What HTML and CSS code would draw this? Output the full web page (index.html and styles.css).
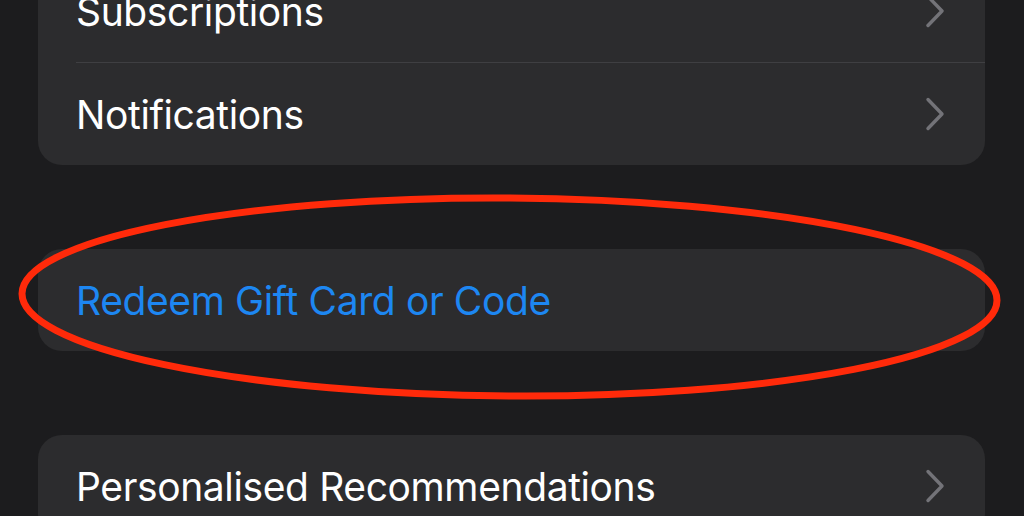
FILE: index.html
```html
<!DOCTYPE html>
<html lang="en">
<head>
<meta charset="utf-8">
<title>Account</title>
<link rel="stylesheet" href="styles.css">
</head>
<body>
<div class="page">
  <div class="list">
    <section class="card">
      <div class="row">
        <span class="label">Subscriptions</span>
        <svg class="chev" viewBox="0 0 20 34" aria-hidden="true"><path d="M3 2.5 L17 17 L3 31.5"/></svg>
      </div>
      <div class="sep"></div>
      <div class="row">
        <span class="label">Notifications</span>
        <svg class="chev" viewBox="0 0 20 34" aria-hidden="true"><path d="M3 2.5 L17 17 L3 31.5"/></svg>
      </div>
    </section>

    <section class="card">
      <div class="row">
        <span class="label link">Redeem Gift Card or Code</span>
      </div>
    </section>

    <section class="card">
      <div class="row">
        <span class="label">Personalised Recommendations</span>
        <svg class="chev" viewBox="0 0 20 34" aria-hidden="true"><path d="M3 2.5 L17 17 L3 31.5"/></svg>
      </div>
    </section>
  </div>

  <svg class="annotation" viewBox="0 0 1024 516" aria-hidden="true">
    <ellipse cx="509.5" cy="297" rx="487.5" ry="99" transform="rotate(0.4 509.5 297)"/>
  </svg>
</div>
</body>
</html>
```

FILE: styles.css
```css
html, body {
  margin: 0;
  padding: 0;
  background: #1c1c1e;
  height: 100%;
  overflow: hidden;
}

.page {
  position: relative;
  width: 1024px;
  height: 516px;
  overflow: hidden;
  font-family: Inter, "Noto Sans", "Liberation Sans", sans-serif;
}

.list {
  display: flex;
  flex-direction: column;
  gap: 84px;
  margin-top: -40px;
  padding: 0 39px 0 38px;
}

.card {
  background: #2c2c2e;
  border-radius: 24px;
  display: flex;
  flex-direction: column;
}

.row {
  height: 102px;
  display: flex;
  align-items: center;
  justify-content: space-between;
  padding: 0 40px 0 38px;
}

.label {
  color: #ffffff;
  font-size: 39px;
  font-weight: 400;
  letter-spacing: -0.38px;
}

.label.link {
  color: #1d87f2;
}

.sep {
  height: 1px;
  background: #3f3f42;
  margin-left: 38px;
}

.chev {
  width: 20px;
  height: 34px;
  flex: none;
}

.chev path {
  fill: none;
  stroke: #737378;
  stroke-width: 3.4;
  stroke-linecap: round;
  stroke-linejoin: round;
}

.annotation {
  position: absolute;
  left: 0;
  top: 0;
  width: 1024px;
  height: 516px;
  pointer-events: none;
}

.annotation ellipse {
  fill: none;
  stroke: #ff2a0a;
  stroke-width: 7;
}
```
